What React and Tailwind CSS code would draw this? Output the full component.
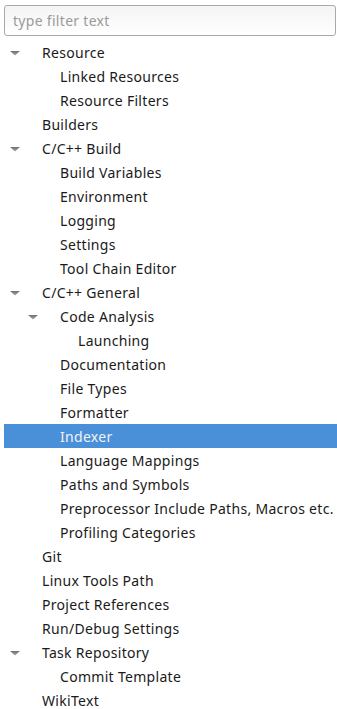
import React from "react";

// Preferences tree (Eclipse-like), level = indent depth
const items = [
  { label: "Resource", level: 0, open: true },
  { label: "Linked Resources", level: 1 },
  { label: "Resource Filters", level: 1 },
  { label: "Builders", level: 0 },
  { label: "C/C++ Build", level: 0, open: true },
  { label: "Build Variables", level: 1 },
  { label: "Environment", level: 1 },
  { label: "Logging", level: 1 },
  { label: "Settings", level: 1 },
  { label: "Tool Chain Editor", level: 1 },
  { label: "C/C++ General", level: 0, open: true },
  { label: "Code Analysis", level: 1, open: true },
  { label: "Launching", level: 2 },
  { label: "Documentation", level: 1 },
  { label: "File Types", level: 1 },
  { label: "Formatter", level: 1 },
  { label: "Indexer", level: 1, selected: true },
  { label: "Language Mappings", level: 1 },
  { label: "Paths and Symbols", level: 1 },
  { label: "Preprocessor Include Paths, Macros etc.", level: 1 },
  { label: "Profiling Categories", level: 1 },
  { label: "Git", level: 0 },
  { label: "Linux Tools Path", level: 0 },
  { label: "Project References", level: 0 },
  { label: "Run/Debug Settings", level: 0 },
  { label: "Task Repository", level: 0, open: true },
  { label: "Commit Template", level: 1 },
  { label: "WikiText", level: 0 },
];

const indent = ["pl-[38px]", "pl-[56px]", "pl-[74px]"];
const arrowPos = ["left-[6px]", "left-[24px]", "left-[42px]"];

function Arrow() {
  return (
    <svg width="10" height="5" viewBox="0 0 10 5" className="block">
      <defs>
        <linearGradient id="ag" x1="0" y1="0" x2="0" y2="1">
          <stop offset="0" stopColor="#6f6f6f" />
          <stop offset="1" stopColor="#a8a8a8" />
        </linearGradient>
      </defs>
      <path d="M0 0 L10 0 L5 4.5 Z" fill="url(#ag)" />
    </svg>
  );
}

export default function App() {
  return (
    <div
      className="w-[337px] h-[709px] bg-white overflow-hidden text-[14px] tracking-[0.3px]"
      style={{ fontFamily: '"Noto Sans", "Open Sans", sans-serif' }}
    >
      <div className="pt-[5px] pl-[4px] pr-[1px]">
        <div className="h-[31px] rounded-[3px] border border-[#a9a9a9] bg-gradient-to-b from-[#f4f4f4] to-white flex items-center pl-[8px] text-[#9a9a9a]">
          type filter text
        </div>
      </div>
      <ul className="mt-[4px] pl-[4px]">
        {items.map((it) => (
          <li
            key={it.label}
            className={
              "relative h-[24px] flex items-center whitespace-nowrap " +
              indent[it.level] +
              (it.selected ? " bg-[#4a90d9] text-[#f2f2f2]" : " text-[#1a1a1a]")
            }
          >
            {it.open && (
              <span className={"absolute top-[11px] " + arrowPos[it.level]}>
                <Arrow />
              </span>
            )}
            {it.label}
          </li>
        ))}
      </ul>
    </div>
  );
}
